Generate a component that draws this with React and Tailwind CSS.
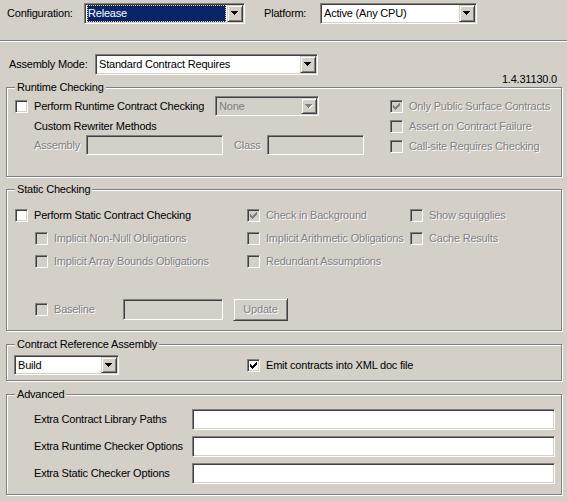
import React from 'react';

const dis = 'text-[#808080] [text-shadow:1px_1px_0_#fff]';
const sunkenEdge =
  'border border-t-[#808080] border-l-[#808080] border-r-white border-b-white shadow-[inset_1px_1px_0_#404040,inset_-1px_-1px_0_#d4d0c8]';
const raisedEdge =
  'border border-t-[#d4d0c8] border-l-[#d4d0c8] border-r-[#404040] border-b-[#404040] shadow-[inset_1px_1px_0_#fff,inset_-1px_-1px_0_#808080]';

function Arrow({ disabled }) {
  const d = 'M0 0h7v1h-7z M1 1h5v1h-5z M2 2h3v1h-3z M3 3h1v1h-1z';
  return (
    <svg width="8" height="5" viewBox="0 0 8 5" shapeRendering="crispEdges">
      {disabled && <path d={d} fill="#fff" transform="translate(1 1)" />}
      <path d={d} fill={disabled ? '#808080' : '#000'} />
    </svg>
  );
}

function Combo({ value, className, selected, disabled }) {
  return (
    <div className={`flex p-[1px] ${sunkenEdge} ${disabled ? 'bg-[#d4d0c8]' : 'bg-white'} ${className}`}>
      <div className="flex-1 flex items-center min-w-0">
        {selected ? (
          <div className="flex-1 h-full mx-[1px] my-[1px] flex items-center bg-[#0a246a] text-white pl-[1px] outline outline-1 outline-dotted outline-[#f3d36b] -outline-offset-1">
            {value}
          </div>
        ) : (
          <div className={`pl-[2px] ${disabled ? 'text-[#808080]' : ''}`}>{value}</div>
        )}
      </div>
      <div className={`w-[16px] h-full flex items-center justify-center bg-[#d4d0c8] ${raisedEdge}`}>
        <Arrow disabled={disabled} />
      </div>
    </div>
  );
}

function TextBox({ className, disabled }) {
  return <div className={`${sunkenEdge} ${disabled ? 'bg-[#d4d0c8]' : 'bg-white'} ${className}`} />;
}

function Check({ checked, disabled }) {
  return (
    <div className={`relative w-[13px] h-[13px] shrink-0 ${sunkenEdge} ${disabled ? 'bg-[#d4d0c8]' : 'bg-white'}`}>
      {checked && (
        <svg className="absolute left-0 top-0" width="11" height="11" viewBox="0 0 11 11" shapeRendering="crispEdges">
          <path
            fill={disabled ? '#808080' : '#000'}
            d="M8 2h1v1h-1z M7 3h2v1h-2z M2 4h1v1h-1z M6 4h3v1h-3z M2 5h2v1h-2z M5 5h3v1h-3z M2 6h5v1h-5z M3 7h3v1h-3z M4 8h1v1h-1z"
          />
        </svg>
      )}
    </div>
  );
}

function CheckItem({ label, checked, disabled, className = '' }) {
  return (
    <div className={`flex items-center ${className}`}>
      <Check checked={checked} disabled={disabled} />
      <span className={`ml-[6px] whitespace-nowrap ${disabled ? dis : ''}`}>{label}</span>
    </div>
  );
}

function Group({ title, className = '', children }) {
  return (
    <fieldset className={`ml-[6px] w-[556px] border border-[#808080] shadow-[inset_1px_1px_0_#fff,1px_1px_0_#fff] ${className}`}>
      <legend className="ml-[8px] px-[2px] leading-[13px] bg-[#d4d0c8]">{title}</legend>
      {children}
    </fieldset>
  );
}

export default function App() {
  return (
    <div className="w-[567px] h-[501px] overflow-hidden bg-[#d4d0c8] text-black text-[11px] leading-[13px] tracking-[-0.2px] font-['Liberation_Sans',Arial,sans-serif]">
      {/* configuration / platform */}
      <div className="flex items-center pt-[3px] pl-[7px]">
        <div className="w-[77px]">Configuration:</div>
        <Combo value="Release" selected className="w-[161px] h-[21px]" />
        <div className="ml-[19px] w-[56px]">Platform:</div>
        <Combo value="Active (Any CPU)" className="w-[157px] h-[21px]" />
      </div>
      <div className="mt-[16px] h-[2px] border-t border-t-[#808080] border-b border-b-white" />

      <div className="flex items-center mt-[12px] pl-[9px]">
        <div className="w-[86px]">Assembly Mode:</div>
        <Combo value="Standard Contract Requires" className="w-[223px] h-[21px]" />
      </div>
      <div className="mt-[-2px] h-[13px] pr-[10px] text-right">1.4.31130.0</div>

      <Group title="Runtime Checking" className="mt-[-5px]">
        <div className="flex pt-[2px] pb-[20px] pl-[8px]">
          <div className="w-[375px]">
            <div className="flex items-center h-[20px]">
              <CheckItem label="Perform Runtime Contract Checking" className="w-[200px]" />
              <Combo value="None" disabled className="w-[104px] h-[20px]" />
            </div>
            <div className="mt-[4px] pl-[19px] h-[13px]">Custom Rewriter Methods</div>
            <div className="flex items-center mt-[2px] pl-[19px] h-[20px]">
              <div className={`w-[52px] ${dis}`}>Assembly</div>
              <TextBox disabled className="w-[137px] h-[20px]" />
              <div className={`ml-[11px] w-[33px] ${dis}`}>Class</div>
              <TextBox disabled className="w-[97px] h-[20px]" />
            </div>
          </div>
          <div>
            <CheckItem label="Only Public Surface Contracts" checked disabled className="h-[20px]" />
            <CheckItem label="Assert on Contract Failure" disabled className="h-[20px]" />
            <CheckItem label="Call-site Requires Checking" disabled className="h-[20px]" />
          </div>
        </div>
      </Group>

      <Group title="Static Checking" className="mt-[6px]">
        <div className="pt-[8px] pb-[9px] pl-[8px]">
          <div className="grid grid-cols-[232px_163px_1fr] auto-rows-[23px]">
            <CheckItem label="Perform Static Contract Checking" />
            <CheckItem label="Check in Background" checked disabled />
            <CheckItem label="Show squigglies" disabled />
            <CheckItem label="Implicit Non-Null Obligations" disabled className="pl-[20px]" />
            <CheckItem label="Implicit Arithmetic Obligations" disabled />
            <CheckItem label="Cache Results" disabled />
            <CheckItem label="Implicit Array Bounds Obligations" disabled className="pl-[20px]" />
            <CheckItem label="Redundant Assumptions" disabled />
          </div>
          <div className="flex items-center mt-[25px] h-[23px] pl-[20px]">
            <CheckItem label="Baseline" disabled className="w-[88px]" />
            <TextBox disabled className="w-[100px] h-[21px]" />
            <div className={`ml-[10px] w-[55px] h-[23px] flex items-center justify-center bg-[#d4d0c8] ${raisedEdge} ${dis}`}>
              Update
            </div>
          </div>
        </div>
      </Group>

      <Group title="Contract Reference Assembly" className="mt-[7px]">
        <div className="flex items-center pt-[4px] pb-[5px] pl-[7px]">
          <Combo value="Build" className="w-[105px] h-[20px]" />
          <CheckItem label="Emit contracts into XML doc file" checked className="ml-[128px]" />
        </div>
      </Group>

      <Group title="Advanced" className="mt-[7px]">
        <div className="flex flex-col gap-[6px] pt-[8px] pb-[10px] pl-[27px]">
          {['Extra Contract Library Paths', 'Extra Runtime Checker Options', 'Extra Static Checker Options'].map((t) => (
            <div key={t} className="flex items-center h-[21px]">
              <div className="w-[158px] whitespace-nowrap">{t}</div>
              <TextBox className="w-[363px] h-[21px]" />
            </div>
          ))}
        </div>
      </Group>
    </div>
  );
}
